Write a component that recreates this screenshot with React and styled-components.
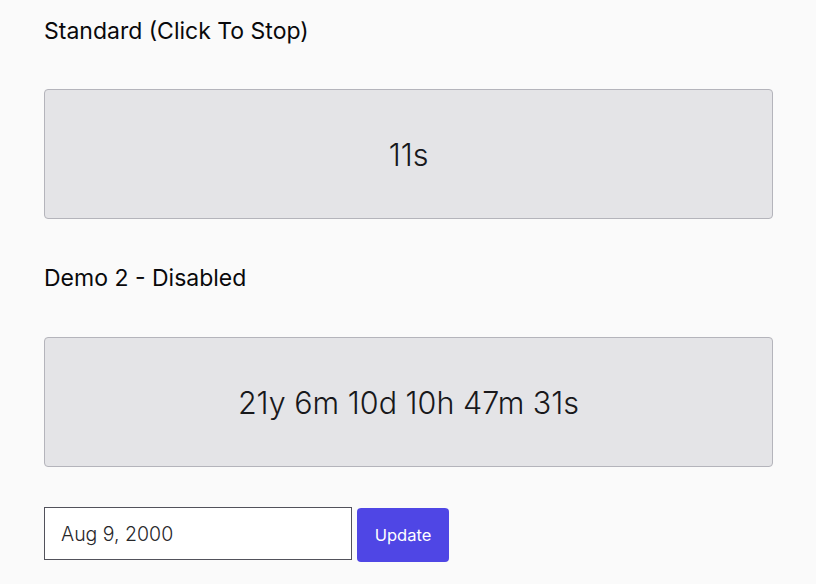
import React from "react";
import styled, { createGlobalStyle } from "styled-components";

const GlobalStyle = createGlobalStyle`
  body {
    margin: 0;
    background: #fafafa;
    font-family: Inter, "Noto Sans", sans-serif;
    color: #09090b;
  }
`;

const Page = styled.div`
  padding: 17px 43px 20px 44px;
  display: flex;
  flex-direction: column;
`;

const Heading = styled.h2`
  margin: 0 0 ${(p) => p.$gap}px;
  font-size: 23px;
  font-weight: 400;
  line-height: 28px;
`;

const TimerBox = styled.div`
  height: 130px;
  box-sizing: border-box;
  display: flex;
  align-items: center;
  justify-content: center;
  background: #e4e4e7;
  border: 1px solid #b4b4bb;
  border-radius: 4px;
  font-size: 30.5px;
  font-weight: 300;
  color: #18181b;
  margin-bottom: ${(p) => p.$gap}px;
  cursor: ${(p) => (p.$disabled ? "default" : "pointer")};
`;

const Controls = styled.form`
  display: flex;
  align-items: flex-start;
  gap: 5px;
`;

const DateInput = styled.input`
  width: 308px;
  height: 53px;
  box-sizing: border-box;
  padding: 0 16px;
  border: 1px solid #52525b;
  border-radius: 0;
  background: #fff;
  font-family: Inter, "Noto Sans", sans-serif;
  font-size: 19.5px;
  font-weight: 300;
  color: #27272a;
  outline: none;
`;

const Button = styled.button`
  width: 92px;
  height: 54px;
  margin-top: 1px;
  border: none;
  border-radius: 4px;
  background: #4f46e5;
  color: #fff;
  font-family: Inter, "Noto Sans", sans-serif;
  font-size: 16.5px;
  font-weight: 400;
  cursor: pointer;
`;

export default function App() {
  return (
    <>
      <GlobalStyle />
      <Page>
        <Heading $gap={44}>Standard (Click To Stop)</Heading>
        <TimerBox $gap={45}>11s</TimerBox>
        <Heading $gap={45}>Demo 2 - Disabled</Heading>
        <TimerBox $gap={40} $disabled>
          21y 6m 10d 10h 47m 31s
        </TimerBox>
        <Controls onSubmit={(e) => e.preventDefault()}>
          <DateInput type="text" defaultValue="Aug 9, 2000" />
          <Button type="submit">Update</Button>
        </Controls>
      </Page>
    </>
  );
}
